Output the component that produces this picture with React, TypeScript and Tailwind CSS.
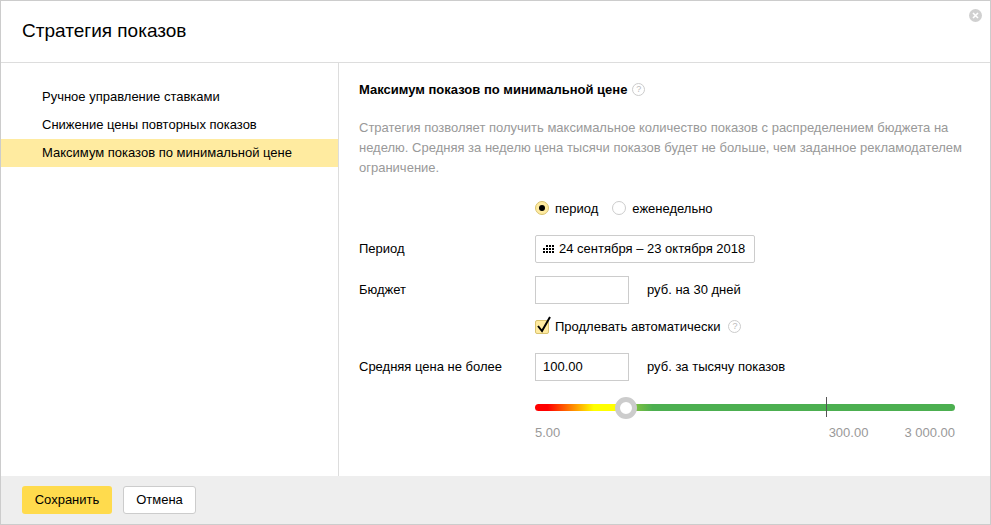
export default function App() {
  const f = { fontFamily: '"Liberation Sans", Arial, sans-serif' };
  return (
    <div style={f} className="relative flex h-[525px] w-[991px] flex-col overflow-hidden border border-[#ccc] bg-white text-[13px] text-black">
      <div className="flex h-[62px] shrink-0 items-center border-b border-[#ddd] px-[21px]">
        <h1 className="text-[19px] font-medium">Стратегия показов</h1>
      </div>
      <svg className="absolute right-[8px] top-[8px]" width="13" height="13" viewBox="0 0 13 13">
        <circle cx="6.5" cy="6.5" r="6.5" fill="#d0d0d0" />
        <path d="M4 4l5 5M9 4l-5 5" stroke="#fff" strokeWidth="1.6" />
      </svg>
      <div className="flex flex-1">
        <div className="w-[338px] shrink-0 border-r border-[#ddd] pt-[20px]">
          {["Ручное управление ставками", "Снижение цены повторных показов"].map((t) => (
            <div key={t} className="flex h-[28px] items-center pl-[41px]">{t}</div>
          ))}
          <div className="flex h-[28px] items-center bg-[#ffeba0] pl-[41px]">Максимум показов по минимальной цене</div>
        </div>
        <div className="flex-1 pl-[20px] pr-[16px] pt-[17px]">
          <div className="flex items-center gap-[5px] font-bold">
            Максимум показов по минимальной цене <Help />
          </div>
          <p className="mt-[18px] leading-[20px] text-[#999]">
            Стратегия позволяет получить максимальное количество показов с распределением бюджета на неделю. Средняя за неделю цена тысячи показов будет не больше, чем заданное рекламодателем ограничение.
          </p>
          <div className="ml-[176px] mt-[21px] flex items-center gap-[14px]">
            <label className="flex items-center gap-[6px]">
              <span className="flex h-[14px] w-[14px] items-center justify-center rounded-full border border-[#d9c370] bg-[#ffeba0]">
                <span className="h-[6px] w-[6px] rounded-full bg-black" />
              </span>
              период
            </label>
            <label className="flex items-center gap-[6px]">
              <span className="h-[14px] w-[14px] rounded-full border border-[#ccc] bg-white" />
              еженедельно
            </label>
          </div>
          <div className="mt-[17px] flex items-center">
            <span className="w-[176px]">Период</span>
            <div className="flex h-[28px] w-[220px] items-center gap-[4px] rounded-[2px] border border-[#ccc] px-[6px]">
              <svg width="13" height="9" viewBox="0 0 13 9">
                {[0, 1, 2].map((r) =>
                  [0, 1, 2, 3].map((c) => (r === 0 && c === 0 ? null : <rect key={r + "-" + c} x={1 + c * 3} y={r * 3} width="2" height="2" fill="#000" />))
                )}
              </svg>
              24 сентября – 23 октября 2018
            </div>
          </div>
          <div className="mt-[13px] flex items-center">
            <span className="w-[176px]">Бюджет</span>
            <div className="h-[28px] w-[94px] border border-[#ccc]" />
            <span className="ml-[18px]">руб. на 30 дней</span>
          </div>
          <div className="ml-[176px] mt-[13px] flex items-center gap-[4px]">
            <span className="relative h-[14px] w-[14px] rounded-[2px] border border-[#d9c370] bg-[#ffeba0]">
              <svg className="absolute -top-[5px] left-0" width="16" height="18" viewBox="0 0 16 18">
                <path d="M2 10l4 5L14 1" stroke="#000" strokeWidth="2" fill="none" />
              </svg>
            </span>
            <span className="ml-[2px]">Продлевать автоматически</span>
            <span className="ml-[4px]"><Help /></span>
          </div>
          <div className="mt-[16px] flex items-center">
            <span className="w-[176px]">Средняя цена не более</span>
            <div className="flex h-[28px] w-[94px] items-center border border-[#ccc] px-[7px]">100.00</div>
            <span className="ml-[18px]">руб. за тысячу показов</span>
          </div>
          <div className="relative ml-[176px] mt-[16px] h-[20px] w-[420px]">
            <div className="absolute top-[7px] h-[7px] w-full rounded-full bg-[linear-gradient(to_right,#f00_0%,#f00_3%,#ff0_14%,#ff0_20%,#7cc043_24%,#4caf50_28%,#4caf50_100%)]" />
            <div className="absolute left-[291px] top-0 h-[20px] w-px bg-[#555]" />
            <div className="absolute left-[80px] top-[0px] h-[22px] w-[22px] rounded-full border-[5px] border-[#ccc] bg-white" />
          </div>
          <div className="ml-[176px] mt-[6px] flex w-[420px] text-[#999]">
            <span>5.00</span>
            <span className="ml-auto">300.00</span>
            <span className="ml-[36px]">3 000.00</span>
          </div>
        </div>
      </div>
      <div className="flex h-[48px] shrink-0 items-center gap-[11px] bg-[#eee] px-[21px]">
        <button className="h-[28px] w-[90px] rounded-[3px] bg-[#ffdb4d]">Сохранить</button>
        <button className="h-[28px] w-[73px] rounded-[3px] border border-[#ccc] bg-white">Отмена</button>
      </div>
    </div>
  );
}

function Help() {
  return (
    <span className="flex h-[13px] w-[13px] items-center justify-center rounded-full border border-[#ccc] text-[9px] font-normal text-[#bbb]">?</span>
  );
}
